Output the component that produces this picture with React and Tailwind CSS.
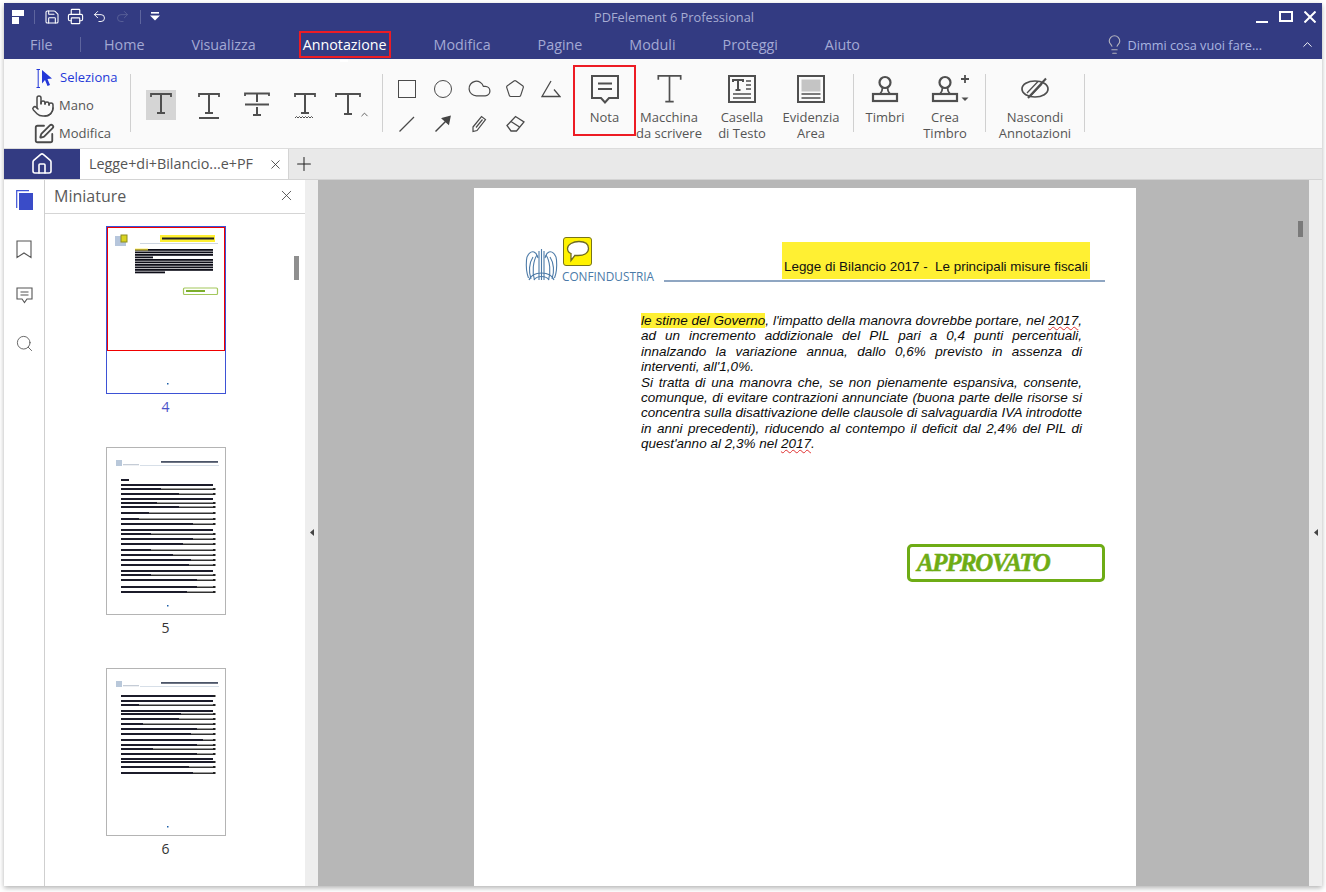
import React from "react";
import { Save, Printer, Undo2, Redo2, House, Lightbulb, ChevronUp, X, Plus, Pointer, SquarePen, Cloud, Pentagon, Search } from "lucide-react";

const UI = { fontFamily: '"Open Sans", sans-serif' };
const S = "#4f4f4f";

const Sep = () => <div className="w-px h-[58px] bg-[#d0d0d0] self-start mt-[15px] shrink-0" />;

function TIcon({ kind, selected }) {
  return (
    <div className={`w-[30px] h-[30px] flex items-center justify-center shrink-0 ${selected ? "bg-[#d5d5d5]" : ""}`}>
      <svg width="30" height="30" viewBox="0 0 30 30" fill="none" stroke={S} strokeWidth="2">
        {kind === "strike" ? (
          <>
            <path d="M3 6V3.5H27V6" strokeWidth="1.8" />
            <path d="M15 4V12M15 17V25M11 25H19" />
            <path d="M3 14.5H27" />
          </>
        ) : kind === "big" ? (
          <>
            <path d="M3 7V4H27V7" strokeWidth="1.8" />
            <path d="M15 4V24M11 24H19" />
          </>
        ) : (
          <>
            <path d="M5 7V4H25V7" strokeWidth="1.8" />
            <path d="M15 4V23M11 23H19" />
            {kind === "under" && <path d="M5 28H25" />}
            {kind === "wave" && <path d="M5 28l1.5-1.5 1.5 1.5 1.5-1.5 1.5 1.5 1.5-1.5 1.5 1.5 1.5-1.5 1.5 1.5 1.5-1.5 1.5 1.5 1.5-1.5 1.5 1.5" strokeWidth="1" />}
          </>
        )}
      </svg>
    </div>
  );
}

function Big({ w, lines, children }) {
  return (
    <div className="flex flex-col items-center shrink-0 pt-[16px]" style={{ width: w }}>
      <div className="h-[34px] flex items-start justify-center">{children}</div>
      <div className="text-[13px] leading-[16px] text-center text-[#555] whitespace-nowrap">
        {lines.map((l) => (
          <div key={l}>{l}</div>
        ))}
      </div>
    </div>
  );
}

const Stamp = () => (
  <svg width="28" height="28" viewBox="0 0 28 28" fill="none" stroke={S} strokeWidth="2.2">
    <circle cx="14" cy="7.5" r="5.5" />
    <path d="M11.5 12.5C11.5 16 11 17 9 19M16.5 12.5C16.5 16 17 17 19 19" strokeWidth="1.8" />
    <rect x="2" y="19" width="24" height="7" />
  </svg>
);

function ShapeCell({ children }) {
  return <div className="w-[36px] h-[35px] flex items-center justify-center">{children}</div>;
}

function Page4Thumb() {
  const lines = [24, 26.5, 29, 31.5, 34, 36.5, 39, 41.5, 44, 46.5];
  return (
    <svg width="116" height="164" viewBox="0 0 116 164" className="block blur-[0.3px]">
      <rect x="8" y="9" width="11" height="10" fill="#b6c6dc" />
      <rect x="14" y="8" width="6" height="7" fill="#d9d320" stroke="#8b8b20" strokeWidth="1" />
      <rect x="53" y="8" width="55" height="7" fill="#fff033" />
      <rect x="55" y="10.5" width="52" height="2" fill="#222" />
      <rect x="33" y="16" width="78" height="0.7" fill="#b8c3d3" />
      {lines.map((y, i) => (
        <rect key={y} x="28" y={y - 2} width={i === 9 ? 30 : i === 3 ? 18 : 78} height="1.8" fill="#0d0d18" />
      ))}
      <rect x="28" y="21.5" width="13" height="2" fill="#ffe93a" opacity="0.7" />
      <rect x="76.5" y="61" width="34" height="6.5" rx="1" fill="#fff" stroke="#a3c75c" strokeWidth="1.2" />
      <rect x="79" y="63" width="19" height="2" fill="#7cae2c" />
      <rect x="60" y="156" width="1.5" height="1.5" fill="#1d5fa8" />
    </svg>
  );
}

function ListThumb({ rows }) {
  return (
    <svg width="118" height="166" viewBox="0 0 118 166" className="block blur-[0.3px]">
      <rect x="9" y="12" width="6" height="6" fill="#b9c8da" />
      <rect x="16" y="16" width="16" height="1.3" fill="#c5ccd6" />
      <rect x="54" y="13" width="57" height="1.8" fill="#4c5568" />
      <rect x="33" y="17" width="79" height="0.7" fill="#c6d2df" />
      {rows.map(([y, e, line], i) =>
        <g key={i}>
          <rect x="14" y={y} width={e} height="2" fill="#1c1c2a" />
          {line && <rect x={14 + e} y={y + 0.6} width={92 - e} height="1.2" fill="#000" />}
          {line && <rect x="106" y={y} width="2.5" height="2" fill="#222" />}
        </g>
      )}
      <rect x="60" y="157" width="1.5" height="1.5" fill="#1d5fa8" />
    </svg>
  );
}

const rows5 = [[31, 8, false], [36, 92, false], [40, 40, true], [45, 58, true], [50, 92, false], [54, 36, true], [58, 58, true], [64, 28, true], [70, 18, true], [75, 72, true], [81, 92, false], [85, 30, true], [90, 72, true], [95, 62, true], [101, 30, true], [106, 52, true], [111, 70, true], [116, 68, true], [122, 92, false], [126, 30, true], [131, 76, true], [138, 76, true], [143, 66, true]];
const rows6 = [[26, 92, true], [31, 92, false], [35, 18, true], [41, 92, false], [44, 60, true], [49, 58, true], [54, 22, true], [59, 76, true], [64, 70, true], [70, 82, true], [75, 76, true], [79, 32, true], [84, 76, true], [89, 92, false], [92, 92, true], [97, 68, true], [103, 72, true]];

function ThumbBox({ label, active, children }) {
  return (
    <div className="flex flex-col items-center h-[221px]">
      <div className={`relative w-[120px] h-[168px] bg-white border ${active ? "border-[#3d52d5]" : "border-[#b4b4b4]"}`}>
        {children}
        {active && <div className="absolute left-0 top-0 w-[118px] h-[124px] border border-[#f00000]" />}
      </div>
      <div className={`mt-[3px] text-[14px] leading-[20px] ${active ? "text-[#4a52c8]" : "text-[#333]"}`}>{label}</div>
    </div>
  );
}

function Line({ children, last }) {
  return <div className={`whitespace-nowrap ${last ? "" : "[text-align:justify] [text-align-last:justify]"}`}>{children}</div>;
}

const Wavy = ({ children }) => <span className="underline decoration-wavy decoration-[#e03030] decoration-1 underline-offset-1">{children}</span>;

export default function App() {
  return (
    <div className="w-[1326px] h-[892px] bg-white pt-[3px] pl-[4px] overflow-hidden" style={UI}>
      <div className="w-[1318px] h-[883px] flex flex-col bg-white shadow-[0_2px_5px_rgba(0,0,0,0.3)]">
        {/* Title bar */}
        <div className="h-[56px] bg-[#333b82] shrink-0 flex flex-col">
          <div className="relative h-[27px] flex items-center pl-[8px] text-white">
            <svg width="12" height="14" viewBox="0 0 12 14" className="shrink-0" fill="#fff">
              <rect x="0" y="0" width="12" height="6" />
              <rect x="0" y="7" width="7" height="7" />
            </svg>
            <div className="w-px h-[14px] bg-[#5e659e] ml-[10px]" />
            <Save size={16} strokeWidth={1.6} className="ml-[9px]" />
            <Printer size={17} strokeWidth={1.6} className="ml-[7px]" />
            <Undo2 size={15} strokeWidth={1.5} className="ml-[8px]" />
            <Redo2 size={15} strokeWidth={1.5} className="ml-[8px] text-[#596097]" />
            <div className="w-px h-[14px] bg-[#5e659e] ml-[10px]" />
            <svg width="10" height="9" viewBox="0 0 10 9" fill="#fff" className="ml-[9px]">
              <rect x="1" y="0" width="8" height="1.6" />
              <path d="M0 3.5H10L5 8.5Z" />
            </svg>
            <div className="absolute left-[30px] right-[8px] top-[6px] text-center text-[12.8px] leading-[16px] text-[#a7acd2]">PDFelement 6 Professional</div>
            <div className="ml-auto flex items-center mr-[6px]">
              <div className="w-[12px] h-[2px] bg-white mt-[11px]" />
              <div className="w-[14px] h-[11px] border-2 border-white ml-[11px]" />
              <svg width="12" height="12" viewBox="0 0 12 12" stroke="#fff" strokeWidth="2" className="ml-[11px]"><path d="M0.5 0.5L11.5 11.5M11.5 0.5L0.5 11.5" /></svg>
            </div>
          </div>
          <div className="flex-1 flex items-center text-[14.3px] leading-[20px] text-[#a3a9d4]">
            <div className="w-[76px] pl-[26px]">File</div>
            <div className="w-px h-[15px] bg-[#5e659e]" />
            <div className="flex items-center gap-[47px] pl-[23px]">
              <span>Home</span>
              <span>Visualizza</span>
              <span className="relative text-white">
                Annotazione
                <span className="absolute left-[-4px] right-[-4px] top-[-4px] h-[27px] border-2 border-[#ed1c24]" />
                <span className="absolute left-[37px] top-[24px] w-[8px] h-[3px] bg-white" />
              </span>
              <span>Modifica</span>
              <span>Pagine</span>
              <span>Moduli</span>
              <span>Proteggi</span>
              <span>Aiuto</span>
            </div>
            <div className="ml-auto flex items-center">
              <Lightbulb size={21} strokeWidth={1.3} className="text-[#b3b3bd]" />
              <span className="ml-[3px] text-[12.7px] text-[#a9b4e0]">Dimmi cosa vuoi fare...</span>
              <ChevronUp size={15} strokeWidth={1.5} className="text-white ml-[38px] mr-[7px]" />
            </div>
          </div>
        </div>

        {/* Ribbon */}
        <div className="h-[90px] shrink-0 bg-[#fafafa] border-b border-[#dcdcdc] flex text-[#555]">
          <div className="w-[126px] shrink-0 pt-[5px] text-[13px]">
            <div className="h-[28px] flex items-center pl-[32px] text-[#2438d8]">
              <svg width="17" height="19" viewBox="0 0 17 19" className="shrink-0">
                <path d="M0.5 0.5H4M0.5 18.5H4M2.2 0.5V18.5" stroke="#2438d8" fill="none" />
                <path d="M6 1L16 9.5L11.5 10L14 16L11.5 17L9 11L6 14.5Z" fill="#2438d8" />
              </svg>
              <span className="ml-[7px]">Seleziona</span>
            </div>
            <div className="h-[28px] flex items-center pl-[27px]">
              <Pointer size={24} strokeWidth={1.5} className="text-[#4a4a4a]" />
              <span className="ml-[4px]">Mano</span>
            </div>
            <div className="h-[28px] flex items-center pl-[29px]">
              <SquarePen size={22} strokeWidth={2} className="text-[#4a4a4a]" />
              <span className="ml-[4px]">Modifica</span>
            </div>
          </div>
          <Sep />
          <div className="w-[251px] shrink-0 flex items-start pl-[15px] pt-[31px]">
            <TIcon kind="plain" selected />
            <div className="ml-[18px]"><TIcon kind="under" /></div>
            <div className="ml-[18px]"><TIcon kind="strike" /></div>
            <div className="ml-[18px]"><TIcon kind="wave" /></div>
            <div className="ml-[13px] relative">
              <TIcon kind="big" />
              <ChevronUp size={11} strokeWidth={1.8} className="absolute left-[26px] top-[19px] text-[#444]" />
            </div>
          </div>
          <Sep />
          <div className="w-[190px] shrink-0 pl-[6px] pt-[12px] grid grid-cols-[repeat(5,36px)] grid-rows-[35px_35px] content-start">
            <ShapeCell><div className="w-[18px] h-[18px] border-[1.5px] border-[#4a4a4a]" /></ShapeCell>
            <ShapeCell><div className="w-[18px] h-[18px] rounded-full border-[1.5px] border-[#4a4a4a]" /></ShapeCell>
            <ShapeCell><Cloud size={25} strokeWidth={1.2} className="text-[#4a4a4a]" /></ShapeCell>
            <ShapeCell><Pentagon size={20} strokeWidth={1.4} className="text-[#4a4a4a]" /></ShapeCell>
            <ShapeCell>
              <svg width="20" height="18" viewBox="0 0 20 18" fill="none" stroke="#4a4a4a" strokeWidth="1.3"><path d="M10 1L1 16.5H19L13 9.5" /></svg>
            </ShapeCell>
            <ShapeCell>
              <svg width="18" height="18" viewBox="0 0 18 18" stroke="#4a4a4a" strokeWidth="1.3"><path d="M1.5 16.5L16 2" /></svg>
            </ShapeCell>
            <ShapeCell>
              <svg width="18" height="18" viewBox="0 0 18 18" stroke="#444" strokeWidth="1.4" fill="#444"><path d="M1.5 16.5L12 6" fill="none" /><path d="M8.5 3.5L16 1.5L14.5 9Z" /></svg>
            </ShapeCell>
            <ShapeCell>
              <svg width="16" height="18" viewBox="0 0 16 18" fill="none" stroke="#4a4a4a" strokeWidth="1.2"><path d="M2 12L10.5 1.5L14.5 4.5L6 15.5L2 16.5Z" /><path d="M5 12.5L11.5 4.5" /></svg>
            </ShapeCell>
            <ShapeCell>
              <svg width="19" height="17" viewBox="0 0 19 17" fill="none" stroke="#4a4a4a" strokeWidth="1.3"><path d="M1 10.5L9.5 1.5L18 7L10.5 16H5Z" /><path d="M5 6.5L13.5 12" /></svg>
            </ShapeCell>
          </div>
          <div className="w-[63px] h-[71px] shrink-0 mt-[6px] border-2 border-[#ed1c24] flex flex-col items-center pt-[8px]">
            <div className="h-[34px]">
              <svg width="28" height="29" viewBox="0 0 28 29" fill="none" stroke={S} strokeWidth="2">
                <path d="M1 1H27V23H18L14 27.5L10 23H1Z" />
                <path d="M7 8.5H21M7 14H21" />
              </svg>
            </div>
            <div className="text-[13px] leading-[16px] text-[#555]">Nota</div>
          </div>
          <Big w={66} lines={["Macchina", "da scrivere"]}>
            <svg width="25" height="28" viewBox="0 0 26 30" fill="none" stroke={S} strokeWidth="1.8"><path d="M1 5V1H25V5" /><path d="M13 1V28.5M8.5 28.5H17.5" /></svg>
          </Big>
          <Big w={80} lines={["Casella", "di Testo"]}>
            <svg width="28" height="28" viewBox="0 0 28 28" fill="none" stroke={S} strokeWidth="2"><rect x="1" y="1" width="26" height="26" /><path d="M5 7V5H15V7M10 5V15M7.5 15H12.5" /><path d="M18 6H23M18 10H23M18 14H23" strokeWidth="1.5" /><path d="M5 19H23M5 23H23" strokeWidth="1.5" /></svg>
          </Big>
          <Big w={58} lines={["Evidenzia", "Area"]}>
            <svg width="28" height="28" viewBox="0 0 28 28" fill="none" stroke={S} strokeWidth="2"><rect x="1" y="1" width="26" height="26" /><rect x="4.5" y="4.5" width="19" height="12" fill="#c4c4c4" stroke="none" /><path d="M4.5 19H23.5M4.5 23H23.5" strokeWidth="1.5" /></svg>
          </Big>
          <div className="w-[13px] shrink-0" />
          <Sep />
          <Big w={62} lines={["Timbri"]}><Stamp /></Big>
          <Big w={58} lines={["Crea", "Timbro"]}>
            <div className="relative">
              <Stamp />
              <svg width="8" height="27" viewBox="0 0 8 27" className="absolute left-[30px] top-0"><path d="M4 0V8M0 4H8" stroke={S} strokeWidth="1.8" /><path d="M0.5 22.5H7.5L4 26Z" fill={S} /></svg>
            </div>
          </Big>
          <div className="w-[11px] shrink-0" />
          <Sep />
          <Big w={98} lines={["Nascondi", "Annotazioni"]}>
            <svg width="28" height="24" viewBox="0 0 28 24" fill="none" stroke={S} strokeWidth="1.7" className="mt-[2px]"><ellipse cx="14" cy="12" rx="13" ry="8" /><path d="M7 21L25 1.5" strokeWidth="2" /><path d="M6 16L17 4.5M10 18.5L21 7" strokeWidth="1.3" /></svg>
          </Big>
          <Sep />
        </div>

        {/* Tabs */}
        <div className="h-[31px] shrink-0 bg-[#e9e9e9] border-b border-[#d4d4d4] flex items-stretch">
          <div className="w-[76px] bg-[#333b82] flex items-center justify-center">
            <House size={24} strokeWidth={1.6} className="text-white" />
          </div>
          <div className="w-[209px] bg-white flex items-center pl-[9px] border-r border-[#d4d4d4]">
            <span className="text-[14.35px] text-[#555] whitespace-nowrap">Legge+di+Bilancio...e+PF</span>
            <X size={15} strokeWidth={1.3} className="ml-auto mr-[5px] text-[#333]" />
          </div>
          <div className="flex items-center pl-[4px]"><Plus size={22} strokeWidth={1.1} className="text-[#222]" /></div>
        </div>

        {/* Body */}
        <div className="flex-1 min-h-0 flex">
          <div className="w-[41px] shrink-0 bg-white border-r border-[#cfcfcf] flex flex-col items-center pt-[10px]">
            <div className="h-[50px]">
              <svg width="18" height="20" viewBox="0 0 18 20" fill="none" className="ml-[2px]">
                <path d="M0.7 18V0.7H13" stroke="#3d52d5" strokeWidth="1.2" />
                <rect x="3" y="3" width="14" height="17" fill="#3a4cc8" />
              </svg>
            </div>
            <div className="h-[47px]">
              <svg width="16" height="19" viewBox="0 0 16 19" fill="none" stroke="#555" strokeWidth="1.1"><path d="M1 1H15V17.5L8 13L1 17.5Z" /></svg>
            </div>
            <div className="h-[47px]">
              <svg width="17" height="17" viewBox="0 0 17 17" fill="none" stroke="#555" strokeWidth="1.1"><path d="M1 1H16V12H11L8.5 15.5L6 12H1Z" /><path d="M4.5 5H12.5M4.5 8H12.5" /></svg>
            </div>
            <Search size={19} strokeWidth={1.1} className="text-[#555]" />
          </div>

          <div className="w-[260px] shrink-0 bg-white flex flex-col relative">
            <div className="h-[34px] shrink-0 border-b border-[#d5d5d5] flex items-center pl-[9px] pr-[10px] pb-[2px]">
              <span className="text-[16px] text-[#5a5a5a]">Miniature</span>
              <X size={17} strokeWidth={1.2} className="ml-auto text-[#444]" />
            </div>
            <div className="pt-[12px] flex flex-col items-center pr-[19px]">
              <ThumbBox label="4" active><Page4Thumb /></ThumbBox>
              <ThumbBox label="5"><ListThumb rows={rows5} /></ThumbBox>
              <ThumbBox label="6"><ListThumb rows={rows6} /></ThumbBox>
            </div>
            <div className="absolute left-[249px] top-[76px] w-[5px] h-[24px] bg-[#8f8f8f]" />
          </div>

          <div className="w-[13px] shrink-0 bg-[#eeeeee] flex items-center justify-center">
            <svg width="4" height="7" viewBox="0 0 4 7" className="mb-[1px]"><path d="M4 0V7L0 3.5Z" fill="#444" /></svg>
          </div>

          <div className="relative w-[991px] shrink-0 bg-[#b7b7b7] pl-[156px] pt-[8px] overflow-hidden">
            <div className="w-[662px] h-[720px] bg-white text-black" style={{ fontFamily: '"Liberation Sans", Arial, sans-serif' }}>
              <div className="pt-[50px] pl-[51px] flex items-end">
                <div className="w-[139px] h-[44px] relative flex items-end">
                  <svg width="33" height="33" viewBox="0 0 33 33" fill="none" stroke="#4d7ba8" strokeWidth="1.1" className="absolute left-0 bottom-[1px]">
                    <path d="M16.5 1V32M14 3V32M19 3V32" />
                    <path d="M12 7C8 13 7 24 9.5 32M21 7C25 13 26 24 23.5 32" />
                    <path d="M8 9C4 15 3.5 24 6 31M25 9C29 15 29.5 24 27 31" />
                    <path d="M1.5 12C1 18 1.5 25 3.5 30M31.5 12C32 18 31.5 25 29.5 30" />
                    <path d="M1.5 12C2 6 6 3 9 4C11.5 5 12.5 8 13 10M31.5 12C31 6 27 3 24 4C21.5 5 20.5 8 20 10" />
                    <path d="M4 32C6 27 11 25 16.5 25C22 25 27 27 29 32M9 32C11 29 13.5 28.5 16.5 28.5C19.5 28.5 22 29 24 32" />
                  </svg>
                  <div className="absolute left-[38px] top-[-1px] w-[29px] h-[29px] rounded-[3px] bg-[#fff200] border border-[#77741a] flex items-center justify-center">
                    <svg width="24" height="23" viewBox="0 0 24 23" fill="#fff" stroke="#6e6a22" strokeWidth="1.3"><path d="M13 1.5C19 1.5 22.5 4 22.5 8.5C22.5 13 18 15.5 12 15.5C11 15.5 10 15.5 9 15.3L5 20.5L5 13.5C2.5 12.5 1.5 10.5 1.5 8.5C1.5 4.5 7 1.5 13 1.5Z" /></svg>
                  </div>
                  <span className="ml-[37px] mb-[-1px] text-[11.8px] leading-[14px] text-[#4a7aa8] whitespace-nowrap" style={UI}>CONFINDUSTRIA</span>
                </div>
                <div className="w-[441px] flex flex-col items-start">
                  <div className="ml-[118px] w-[308px] h-[37px] bg-[#fff033] text-[13.4px] leading-[16px] pl-[2px] pt-[17px] whitespace-pre text-[#111]">Legge di Bilancio 2017 -  Le principali misure fiscali</div>
                  <div className="mt-[1px] w-full h-[2px] bg-[#8fa6c2]" />
                </div>
              </div>
              <div className="mt-[31px] ml-[167px] w-[441px] italic text-[13.5px] leading-[15.375px] text-[#0c0c0c]">
                <Line><span className="bg-[#fff033]">le stime del Governo</span>, l'impatto della manovra dovrebbe portare, nel <Wavy>2017</Wavy>,</Line>
                <Line>ad un incremento addizionale del PIL pari a 0,4 punti percentuali,</Line>
                <Line>innalzando la variazione annua, dallo 0,6% previsto in assenza di</Line>
                <Line last>interventi, all'1,0%.</Line>
                <Line>Si tratta di una manovra che, se non pienamente espansiva, consente,</Line>
                <Line>comunque, di evitare contrazioni annunciate (buona parte delle risorse si</Line>
                <Line>concentra sulla disattivazione delle clausole di salvaguardia IVA introdotte</Line>
                <Line>in anni precedenti), riducendo al contempo il deficit dal 2,4% del PIL di</Line>
                <Line last>quest'anno al 2,3% nel <Wavy>2017</Wavy>.</Line>
              </div>
              <div className="mt-[93px] ml-[433px] w-[198px] h-[38px] rounded-[5px] border-[3.5px] border-[#6eac15] flex items-center pl-[7px]">
                <span className="text-[25px] leading-[28px] font-bold italic tracking-[-1.4px] text-[#6eac15] whitespace-nowrap [-webkit-text-stroke:0.5px_#6eac15]" style={{ fontFamily: '"Liberation Serif", serif' }}>APPROVATO</span>
              </div>
            </div>
            <div className="absolute left-[980px] top-[41px] w-[5px] h-[16px] bg-[#7a7a7a]" />
          </div>

          <div className="flex-1 bg-[#eeeeee] flex items-center justify-center">
            <svg width="4" height="7" viewBox="0 0 4 7" className="mb-[1px]"><path d="M4 0V7L0 3.5Z" fill="#444" /></svg>
          </div>
        </div>
      </div>
    </div>
  );
}
